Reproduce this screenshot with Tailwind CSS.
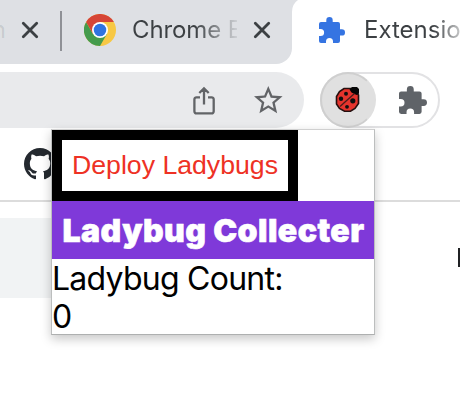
<!DOCTYPE html>
<html lang="en">
<head>
<meta charset="utf-8">
<title>Ladybug Collecter</title>
<script src="https://cdn.jsdelivr.net/npm/@tailwindcss/browser@4"></script>
</head>
<body class="relative w-[460px] h-[404px] overflow-hidden bg-white font-['Inter',sans-serif] text-[#3c4043]">
  <!-- Tab strip -->
  <header class="flex h-16 bg-white">
    <div class="relative flex w-[292px] shrink-0 items-center rounded-br-[16px] bg-[#dee0e4]">
      <span class="mt-[-4px] w-[6px] shrink-0 overflow-hidden flex justify-end text-[24px] leading-[28px] text-[#3c4043]/15">n</span>
      <svg class="ml-[15px] mt-[-4px] size-[18px] shrink-0" viewBox="0 0 18 18" fill="none" stroke="#3c4043" stroke-width="2.8" stroke-linecap="round"><path d="M2.3 2.3 15.7 15.7M15.7 2.3 2.3 15.7"/></svg>
      <div class="ml-[21px] mt-[-2px] h-10 w-[2px] shrink-0 bg-[#8f9196]"></div>
      <svg class="ml-[22px] mt-[-4px] size-8 shrink-0" viewBox="0 0 48 48">
        <circle cx="24" cy="24" r="24" fill="#f7c844"/>
        <path d="M3.2 12A24 24 0 0 0 24 48L34.4 30 24 24 13.6 30Z" fill="#449b4c"/>
        <path d="M3.2 12 13.6 30 24 24V12H44.8A24 24 0 0 0 3.2 12Z" fill="#d64536"/>
        <circle cx="24" cy="24" r="12" fill="#fff"/>
        <circle cx="24" cy="24" r="9.4" fill="#2f73e1"/>
      </svg>
      <span class="ml-[16px] mt-[-4px] w-[105px] shrink-0 overflow-hidden whitespace-nowrap bg-linear-to-r from-[#3c4043] from-60% to-[#3c4043]/10 bg-clip-text text-[24px] leading-[30px] tracking-[-0.1px] text-transparent">Chrome E</span>
      <svg class="ml-[16px] mt-[-4px] size-[18px] shrink-0" viewBox="0 0 18 18" fill="none" stroke="#3c4043" stroke-width="2.8" stroke-linecap="round"><path d="M2.3 2.3 15.7 15.7M15.7 2.3 2.3 15.7"/></svg>
      <svg class="absolute left-[292px] top-0 h-3 w-2" viewBox="0 0 8 12"><path d="M0 0H6Q0 4 0 12Z" fill="#dee0e4"/></svg>
    </div>
    <div class="flex flex-1 items-center pl-[27px]">
      <svg class="mt-[-4px] size-[26px] shrink-0" viewBox="0 0 26 26" fill="#3574e2"><path d="M2 5H7.3V3.3a3.2 3.2 0 0 1 6.4 0V5H19a2 2 0 0 1 2 2v5.2h1.8a3.2 3.2 0 0 1 0 6.4H21V24a2 2 0 0 1-2 2h-5v-1.6a3.5 3.5 0 0 0-7 0V26H2a2 2 0 0 1-2-2v-5h1.600a3.5 3.5 0 0 0 0-7H0V7a2 2 0 0 1 2-2Z"/></svg>
      <span class="ml-[19px] mt-[-4px] w-[96px] shrink-0 overflow-hidden whitespace-nowrap bg-linear-to-r from-[#3c4043] from-72% to-[#3c4043]/30 bg-clip-text text-[24px] leading-[30px] text-transparent">Extensio</span>
    </div>
  </header>

  <!-- Toolbar -->
  <div class="flex h-[72px] pt-2">
    <div class="flex h-14 w-[304px] shrink-0 items-center rounded-r-full bg-[#e9eaec]">
      <svg class="ml-[192px] size-[30px] shrink-0" viewBox="0 0 30 30" fill="none" stroke="#626467" stroke-width="2.3"><path d="M8 12.4H4.5A2 2 0 0 0 2.4 14.4V26.3a2 2 0 0 0 2.1 2.1H19.5A2 2 0 0 0 21.7 26.3V14.4a2 2 0 0 0-2.2-2H16M12 19.5V4M7.3 8 12 3.4l4.7 4.6"/></svg>
      <svg class="ml-[31px] size-[30px] shrink-0" viewBox="1.3 1.3 21 21" fill="#626467"><path d="M22 9.24l-7.19-.62L12 2 9.19 8.63 2 9.24l5.46 4.73L5.82 21 12 17.27 18.18 21l-1.63-7.03L22 9.24zM12 15.4l-3.76 2.27 1-4.28-3.32-2.88 4.38-.38L12 6.1l1.71 4.04 4.38.38-3.32 2.88 1 4.28L12 15.4z"/></svg>
    </div>
    <div class="ml-4 flex h-14 w-[120px] shrink-0 items-center rounded-full border-2 border-[#e2e2e4] bg-white">
      <div class="ml-[-2px] flex size-14 shrink-0 items-center justify-center rounded-full border-2 border-[#cfcfcf] border-r-[#e0e0e0] bg-[#e0e0e0]">
        <svg class="size-[28px]" viewBox="0 0 28 28">
          <path d="M10 2.5h7.5l3.5 2 3.5 4.5v8.5l-3.500 5-4.500 2.700h-6l-5-2.700-3-4.500v-7.500l3-5Z" fill="#e5342d" stroke="#24100f" stroke-width="1.6"/>
          <path d="M15.5 3.5 18 1h5l2 2v4.5l-2.500 1.500-5-2.500Z" fill="#050505"/>
          <path d="M6 20.5 20.5 7.5" stroke="#4b1d1b" stroke-width="1.3"/>
          <circle cx="12" cy="7.8" r="2" fill="#101010"/>
          <circle cx="7" cy="12.8" r="2.2" fill="#101010"/>
          <circle cx="18.8" cy="14.8" r="2.6" fill="#101010"/>
          <circle cx="13" cy="20.8" r="1.9" fill="#101010"/>
        </svg>
      </div>
      <svg class="ml-[22.5px] mt-[-1px] size-7 shrink-0" viewBox="0 0 26 26" fill="#5f6368"><path d="M2 5H7.3V3.3a3.2 3.2 0 0 1 6.4 0V5H19a2 2 0 0 1 2 2v5.2h1.8a3.2 3.2 0 0 1 0 6.4H21V24a2 2 0 0 1-2 2h-5v-1.6a3.5 3.5 0 0 0-7 0V26H2a2 2 0 0 1-2-2v-5h1.600a3.5 3.5 0 0 0 0-7H0V7a2 2 0 0 1 2-2Z"/></svg>
    </div>
  </div>

  <!-- Bookmarks bar -->
  <div class="flex h-[66px] items-center border-b-2 border-[#dcdcdc] pb-[8px] pl-6">
    <svg class="size-8" viewBox="0 0 16 16" fill="#24292f"><path d="M8 0C3.58 0 0 3.58 0 8c0 3.54 2.29 6.53 5.47 7.59.4.07.55-.17.55-.38 0-.19-.01-.82-.01-1.49-2.01.37-2.53-.49-2.69-.94-.09-.23-.48-.94-.82-1.13-.28-.15-.68-.52-.01-.53.63-.01 1.08.58 1.23.82.72 1.21 1.87.87 2.33.66.07-.52.28-.87.51-1.07-1.78-.2-3.64-.89-3.64-3.95 0-.87.31-1.59.82-2.15-.08-.2-.36-1.02.08-2.12 0 0 .67-.21 2.2.82.64-.18 1.32-.27 2-.27s1.36.09 2 .27c1.53-1.04 2.2-.82 2.2-.82.44 1.1.16 1.92.08 2.12.51.56.82 1.27.82 2.15 0 3.07-1.87 3.75-3.65 3.95.29.25.54.73.54 1.48 0 1.07-.01 1.93-.01 2.2 0 .21.15.46.55.38A8 8 0 0 0 16 8c0-4.42-3.58-8-8-8Z"/></svg>
  </div>

  <!-- Page -->
  <main class="flex justify-between pt-4">
    <div class="h-20 w-[100px] bg-[#f1f3f4]"></div>
    <div class="mt-[30px] h-[19px] w-[2px] bg-[#202124]"></div>
  </main>

  <!-- Extension popup -->
  <section class="absolute left-[51px] top-[129px] w-[324px] border border-t-[#d0d0d0] border-x-[#bcbebe] border-b-[#aeb0b0] bg-white text-black shadow-[0_4px_10px_rgba(0,0,0,0.22)]">
    <button class="block h-[71px] w-[246px] whitespace-nowrap border-[10px] border-black bg-white pl-[10px] text-left font-['Liberation_Sans',sans-serif] text-[26.67px] leading-[51px] text-[#ee3124]">Deploy Ladybugs</button>
    <h1 class="h-[58px] whitespace-nowrap bg-[#7f39d9] pl-[10.5px] text-[32px] font-black leading-[60px] tracking-[0.44px] text-white [-webkit-text-stroke:0.6px_white]">Ladybug Collecter</h1>
    <div class="h-[75px] pt-px text-[32px] leading-[38px]">
      <p class="whitespace-nowrap tracking-[-0.75px]">Ladybug Count:</p>
      <p class="tracking-[-0.8px]">0</p>
    </div>
  </section>
</body>
</html>
